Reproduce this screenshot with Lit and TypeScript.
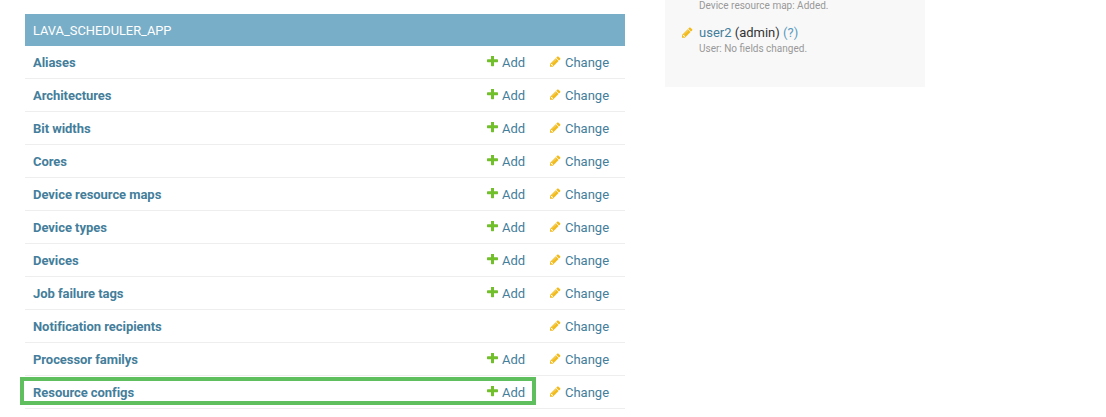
import { LitElement, html, css, svg } from "lit";
import { customElement } from "lit/decorators.js";

const plus = svg`<path d="M1600 736v192q0 40-28 68t-68 28h-416v416q0 40-28 68t-68 28h-192q-40 0-68-28t-28-68v-416h-416q-40 0-68-28t-28-68v-192q0-40 28-68t68-28h416v-416q0-40 28-68t68-28h192q40 0 68 28t28 68v416h416q40 0 68 28t28 68z" fill="#70bf2b"/>`;
const pencil = svg`<path d="M491 1536l91-91-235-235-91 91v107h128v128h107zm523-928q0-22-22-22-10 0-17 7l-542 542q-7 7-7 17 0 22 22 22 10 0 17-7l542-542q7-7 7-17zm-54-192l416 416-832 832h-416v-416zm683 96q0 53-37 90l-166 166-416-416 166-165q36-38 90-38 53 0 91 38l235 234q37 39 37 91z" fill="#f2bb1c"/>`;

const rows: [string, boolean][] = [
  ["Aliases", true],
  ["Architectures", true],
  ["Bit widths", true],
  ["Cores", true],
  ["Device resource maps", true],
  ["Device types", true],
  ["Devices", true],
  ["Job failure tags", true],
  ["Notification recipients", false],
  ["Processor familys", true],
  ["Resource configs", true],
];

@customElement("app-root")
export class AppRoot extends LitElement {
  static styles = css`
    :host {
      display: block;
      width: 1106px;
      height: 417px;
      overflow: hidden;
      position: relative;
      background: #fff;
      font-family: Roboto, "Liberation Sans", sans-serif;
      font-size: 13px;
      color: #333;
    }
    .page { display: flex; gap: 40px; padding-left: 25px; }
    .module { width: 600px; margin-top: 14px; flex: none; }
    .caption {
      background: #79aec8;
      color: #fff;
      height: 31px;
      padding-top: 1px;
      line-height: 32px;
      padding-left: 8px;
      font-size: 12.85px;
    }
    .row {
      display: flex;
      height: 31px;
      padding-top: 1px;
      line-height: 32px;
      border-bottom: 1px solid #eee;
      color: #447e9b;
    }
    .name { flex: 1; padding-left: 8px; font-weight: 700; letter-spacing: -0.05px; }
    .add, .change { display: flex; align-items: center; flex: none; }
    .add { width: 63px; }
    .change { width: 75px; }
    .icon { width: 11px; height: 11px; margin-right: 4px; flex: none; position: relative; top: -1px; }
    .sidebar {
      width: 260px;
      height: 87px;
      background: #f8f8f8;
      flex: none;
      box-sizing: border-box;
      padding-left: 17px;
    }
    .prev { padding-left: 17px; font-size: 10px; line-height: 11px; color: #999; }
    .entry { display: flex; margin-top: 14px; }
    .entry .icon { margin-top: 2px; margin-right: 6px; top: 0; }
    .who { line-height: 16px; }
    .link { color: #447e9b; }
    .q { color: #5b9bc0; }
    .meta { font-size: 10px; line-height: 15px; color: #999; }
    .highlight {
      position: absolute;
      left: 20px;
      top: 377px;
      width: 508px;
      height: 20px;
      border: 4px solid #5fbf5f;
    }
  `;

  render() {
    return html`
      <div class="page">
        <div class="module">
          <div class="caption">LAVA_SCHEDULER_APP</div>
          ${rows.map(
            ([name, add]) => html`
              <div class="row">
                <div class="name">${name}</div>
                <div class="add">
                  ${add
                    ? html`<svg class="icon" viewBox="192 224 1408 1408">${plus}</svg>Add`
                    : ""}
                </div>
                <div class="change">
                  <svg class="icon" viewBox="128 128 1600 1536">${pencil}</svg>Change
                </div>
              </div>
            `
          )}
        </div>
        <div class="sidebar">
          <div class="prev">Device resource map: Added.</div>
          <div class="entry">
            <svg class="icon" viewBox="128 128 1600 1536">${pencil}</svg>
            <div>
              <div class="who"><span class="link">user2</span> (admin) <span class="q">(?)</span></div>
              <div class="meta">User: No fields changed.</div>
            </div>
          </div>
        </div>
      </div>
      <div class="highlight"></div>
    `;
  }
}
